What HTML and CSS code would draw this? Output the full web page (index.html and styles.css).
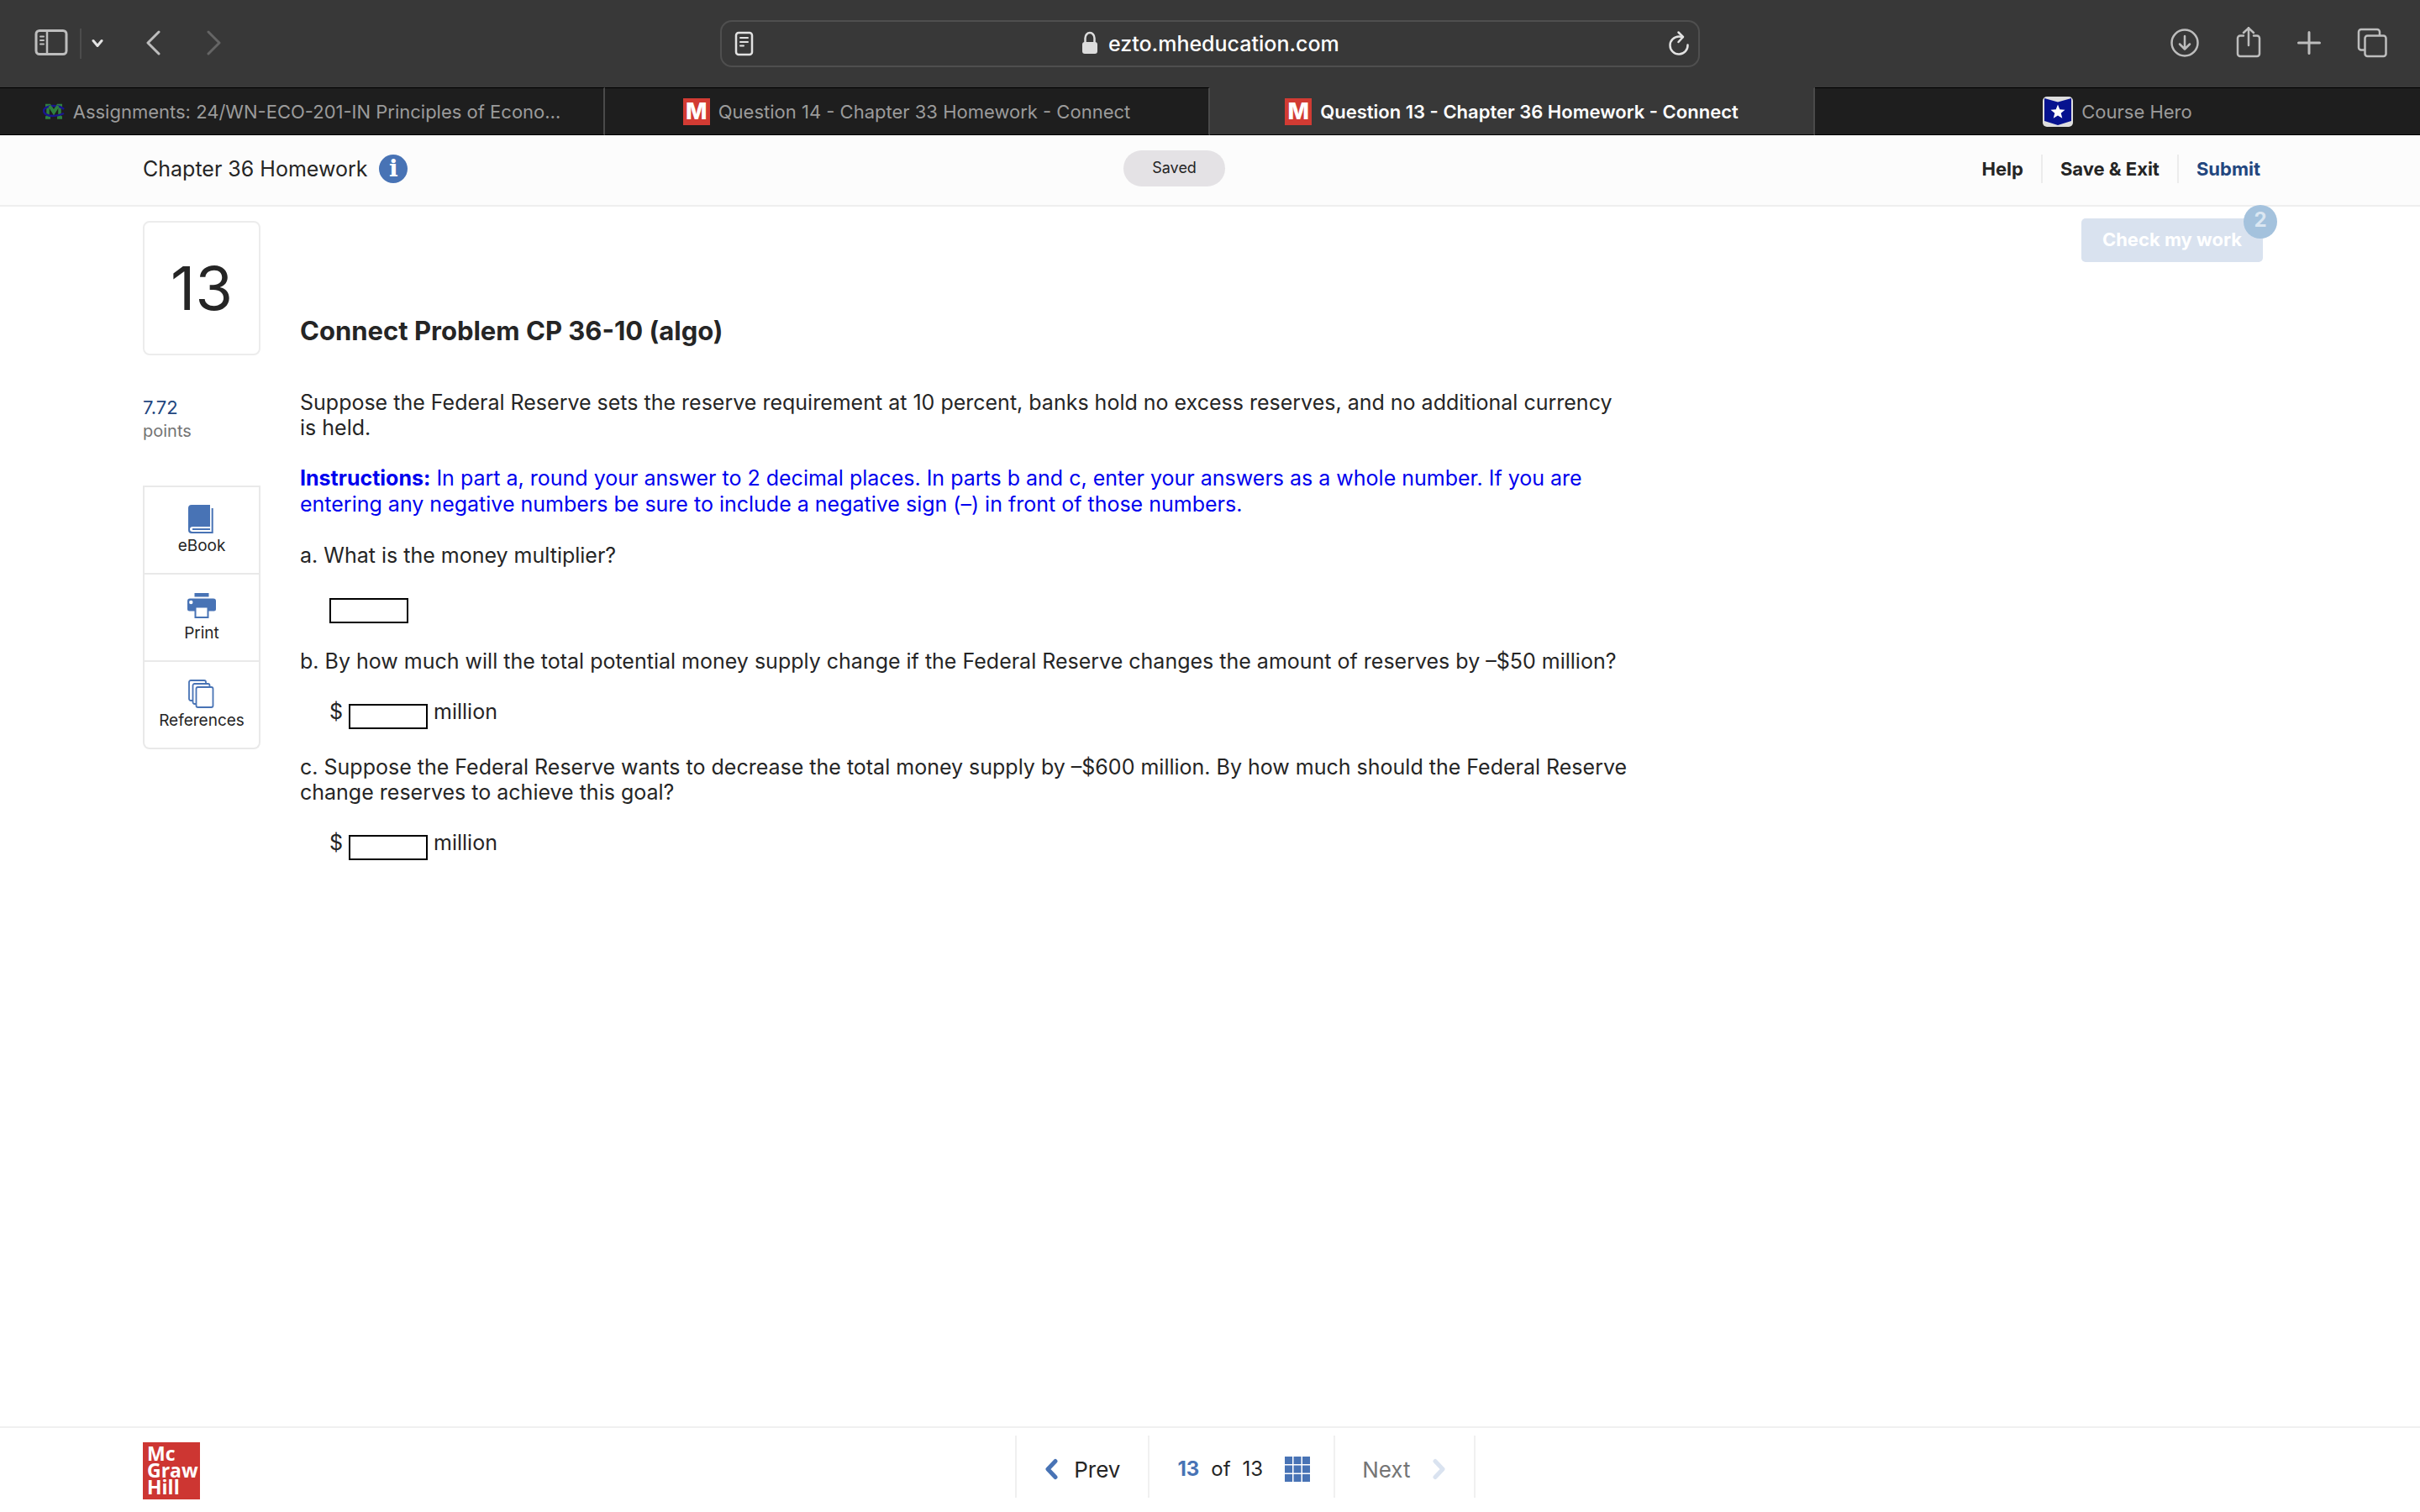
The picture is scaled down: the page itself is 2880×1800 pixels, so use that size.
FILE: index.html
```html
<!DOCTYPE html>
<html lang="en">
<head>
  <meta charset="UTF-8" />
  <meta name="viewport" content="width=device-width, initial-scale=1.0" />
  <title>Question 13 - Chapter 36 Homework - Connect</title>
  <link rel="stylesheet" href="styles.css">
</head>
<body>
  <!-- Browser toolbar -->
  <div class="toolbar">
    <div class="tools-left">
      <button class="icon-btn" aria-label="Sidebar">
        <svg width="44" height="40" viewBox="0 0 44 40" fill="none" stroke="#bdbdbd" stroke-width="3" stroke-linecap="round">
          <rect x="4" y="4.5" width="36" height="28" rx="4"/>
          <path d="M17 5v27" stroke-width="2.5"/>
          <path d="M9 11.500h4M9 16h4M9 20.500h4" stroke-width="2"/>
        </svg>
      </button>
      <span class="tool-divider"></span>
      <button class="icon-btn menu-btn" aria-label="Tab groups">
        <svg width="14" height="40" viewBox="0 0 14 40" fill="none" stroke="#e4e4e4" stroke-width="3" stroke-linecap="round" stroke-linejoin="round"><path d="M2 16.500l5 6 5-6"/></svg>
      </button>
      <button class="icon-btn back-btn" aria-label="Back">
        <svg width="18" height="40" viewBox="0 0 18 40" fill="none" stroke="#bdbdbd" stroke-width="3" stroke-linecap="round" stroke-linejoin="round"><path d="M15 6L2 19l13 13"/></svg>
      </button>
      <button class="icon-btn" aria-label="Forward" disabled>
        <svg width="18" height="40" viewBox="0 0 18 40" fill="none" stroke="#656565" stroke-width="3" stroke-linecap="round" stroke-linejoin="round"><path d="M2 6l13 13L2 32"/></svg>
      </button>
    </div>

    <div class="address">
      <button class="icon-btn" aria-label="Reader">
        <svg width="24" height="32" viewBox="0 0 24 32" fill="none" stroke="#e2e2e2" stroke-width="2.5" stroke-linecap="round">
          <rect x="3" y="3" width="19" height="26" rx="3"/>
          <path d="M8 9h9M8 14h9M8 18.500h4" stroke-width="2"/>
        </svg>
      </button>
      <div class="address-url">
        <svg width="20" height="32" viewBox="0 0 20 32">
          <path d="M4.500 15V9.500a5.500 6.500 0 0 1 11 0V15" fill="none" stroke="#dcdcdc" stroke-width="2.500"/>
          <rect x="1" y="14" width="18" height="14" rx="3" fill="#dcdcdc"/>
        </svg>
        <input class="url-input" type="text" aria-label="Address" value="ezto.mheducation.com">
      </div>
      <button class="icon-btn" aria-label="Reload">
        <svg width="26" height="32" viewBox="0 0 26 32" fill="none" stroke="#e2e2e2" stroke-width="2.500" stroke-linecap="round" stroke-linejoin="round">
          <path d="M23.500 17.500A10.500 10.500 0 1 1 13 7.500c1.500 0 3 .2 4.500.8"/>
          <path d="M12.500 2.500l5.500 5.500-5.500 6"/>
        </svg>
      </button>
    </div>

    <div class="tools-right">
      <button class="icon-btn" aria-label="Downloads">
        <svg width="36" height="40" viewBox="0 0 36 40" fill="none" stroke="#bdbdbd" stroke-width="2.500" stroke-linecap="round" stroke-linejoin="round">
          <circle cx="18" cy="19" r="15.500"/>
          <path d="M18 11v15M12 20.500l6 6 6-6"/>
        </svg>
      </button>
      <button class="icon-btn" aria-label="Share">
        <svg width="30" height="40" viewBox="0 0 30 40" fill="none" stroke="#bdbdbd" stroke-width="2.500" stroke-linecap="round" stroke-linejoin="round">
          <path d="M9 10.500H5a3 3 0 0 0-3 3V32a3 3 0 0 0 3 3h20a3 3 0 0 0 3-3V13.500a3 3 0 0 0-3-3h-4"/>
          <path d="M15 22V1M9 7l6-5.700L21 7"/>
        </svg>
      </button>
      <button class="icon-btn" aria-label="New tab">
        <svg width="28" height="40" viewBox="0 0 28 40" fill="none" stroke="#bdbdbd" stroke-width="3" stroke-linecap="round"><path d="M14 6.500v25M1.500 19h25"/></svg>
      </button>
      <button class="icon-btn" aria-label="Tab overview">
        <svg width="36" height="40" viewBox="0 0 36 40" fill="none" stroke="#bdbdbd" stroke-width="2.500" stroke-linejoin="round">
          <path d="M9 27.500H5a3 3 0 0 1-3-3V6a3 3 0 0 1 3-3h19a3 3 0 0 1 3 3v4"/>
          <rect x="9.500" y="10.500" width="25" height="24.500" rx="3"/>
        </svg>
      </button>
    </div>
  </div>

  <nav class="tabs">
    <a class="tab" href="#">
      <svg width="26" height="24" viewBox="0 0 26 24" fill="none">
        <path d="M3 4.500h5l5 8 5-8h5M6 4v14M20 4v15M3 19h6M17 19h6" stroke="#2f8040" stroke-width="3.500"/>
        <path d="M25 9c-3-3-8-4-13-4S1 7.500 1 11s5 6 11 6 9-1 13-3" stroke="#1a1590" stroke-width="2.500"/>
        <path d="M8 5l5 8 5-8" stroke="#2f8040" stroke-width="3.500"/>
      </svg>
      Assignments: 24/WN-ECO-201-IN Principles of Econo…
    </a>
    <a class="tab" href="#"><span class="favicon">M</span>Question 14 - Chapter 33 Homework - Connect</a>
    <a class="tab active" href="#"><span class="favicon">M</span>Question 13 - Chapter 36 Homework - Connect</a>
    <a class="tab" href="#">
      <svg width="36" height="36" viewBox="0 0 36 36">
        <rect width="36" height="36" rx="5" fill="#dedede"/>
        <path d="M2 2l16 4.500L34 2v27l-16 5-16-5z" fill="#06128f"/>
        <path d="M18 9.500l2.300 5.800 6.200.4-4.800 4 1.600 6.100-5.300-3.400-5.300 3.400 1.600-6.100-4.800-4 6.200-.4z" fill="#fff"/>
      </svg>
      Course Hero
    </a>
  </nav>

  <header class="header">
    <div class="header-title">
      <span>Chapter 36 Homework</span>
      <button class="info-btn" aria-label="Information">i</button>
    </div>
    <span class="saved">Saved</span>
    <nav class="header-nav">
      <a href="#">Help</a>
      <a href="#">Save &amp; Exit</a>
      <a class="submit" href="#">Submit</a>
    </nav>
  </header>

  <main class="main">
    <aside class="sidebar">
      <div class="number">13</div>
      <div class="points-value">7.72</div>
      <div class="points-label">points</div>
      <div class="side-tools">
        <button class="side-btn">
          <svg width="34" height="34" viewBox="0 0 34 34" fill="#4873b5">
            <path d="M5 0H27V26H6.500a3.500 3 0 0 0 0 6H28.700V4h2V34H5a4 4 0 0 1-4-4V4a4 4 0 0 1 4-4z"/>
            <path d="M6 28h21v2H6z"/>
          </svg>
          eBook
        </button>
        <button class="side-btn">
          <svg width="34" height="34" viewBox="0 0 34 34" fill="#4873b5">
            <path d="M8.500 1h17v4.500h-17zM3 7.500h28a3 3 0 0 1 3 3V20a2.500 2.500 0 0 1-2.500 2.500H25.500V31h-17v-8.500H2.500A2.500 2.500 0 0 1 0 20v-9.500a3 3 0 0 1 3-3z"/>
            <path d="M10.500 18.500h13v10.500h-13z" fill="#fff"/>
            <circle cx="4.300" cy="12" r="2.200" fill="#fff"/>
          </svg>
          Print
        </button>
        <button class="side-btn">
          <svg width="34" height="34" viewBox="0 0 34 34" fill="#fff" stroke="#4873b5" stroke-width="1.800">
            <rect x="2" y="1" width="20" height="24" rx="2"/>
            <rect x="6.500" y="5" width="20" height="24" rx="2"/>
            <rect x="10.500" y="9" width="20" height="24" rx="2"/>
          </svg>
          References
        </button>
      </div>
    </aside>

    <section class="question">
      <h1>Connect Problem CP 36-10 (algo)</h1>
      <p>Suppose the Federal Reserve sets the reserve requirement at 10 percent, banks hold no excess reserves, and no additional currency is held.</p>
      <p class="instructions"><b>Instructions:</b> In part a, round your answer to 2 decimal places. In parts b and c, enter your answers as a whole number. If you are entering any negative numbers be sure to include a negative sign (–) in front of those numbers.</p>
      <p><label for="answer-a">a. What is the money multiplier?</label></p>
      <div class="answer"><input id="answer-a" type="text"></div>
      <p><label for="answer-b">b. By how much will the total potential money supply change if the Federal Reserve changes the amount of reserves by –$50 million?</label></p>
      <div class="answer"><span>$</span><input id="answer-b" type="text"><span>million</span></div>
      <p><label for="answer-c">c. Suppose the Federal Reserve wants to decrease the total money supply by –$600 million. By how much should the Federal Reserve change reserves to achieve this goal?</label></p>
      <div class="answer"><span>$</span><input id="answer-c" type="text"><span>million</span></div>
    </section>

    <div class="check">
      <button class="check-btn" disabled>Check my work</button>
      <span class="check-count">2</span>
    </div>
  </main>

  <footer class="footer">
    <a class="logo" href="#">Mc<br>Graw<br>Hill</a>
    <nav class="pager">
      <button class="pager-cell prev">
        <svg width="16" height="26" viewBox="0 0 16 26" fill="none" stroke="#4873b5" stroke-width="5" stroke-linecap="round" stroke-linejoin="round"><path d="M13 3.500L4 13l9 9.500"/></svg>
        Prev
      </button>
      <div class="pager-cell count">
        <b>13</b><span>of</span><span>13</span>
        <button class="icon-btn grid-btn" aria-label="Question list">
          <svg width="30" height="30" viewBox="0 0 30 30" fill="#4873b5"><path d="M0 0h9v9H0zM10.500 0h9v9h-9zM21 0h9v9h-9zM0 10.500h9v9H0zM10.500 10.500h9v9h-9zM21 10.500h9v9h-9zM0 21h9v9H0zM10.500 21h9v9h-9zM21 21h9v9h-9z"/></svg>
        </button>
      </div>
      <button class="pager-cell next" disabled>
        Next
        <svg width="16" height="26" viewBox="0 0 16 26" fill="none" stroke="#dae3f0" stroke-width="5" stroke-linecap="round" stroke-linejoin="round"><path d="M3 3.500l9 9.500-9 9.500"/></svg>
      </button>
    </nav>
  </footer>
</body>
</html>
```
FILE: styles.css
```css
* {
  box-sizing: border-box;
}
body {
  margin: 0;
  min-height: 100vh;
  display: flex;
  flex-direction: column;
  font-family: Inter, "Open Sans", sans-serif;
  font-size: 25px;
  line-height: 30px;
  color: #252525;
  background: #fff;
}
button,
input {
  font-family: inherit;
  color: inherit;
}
a {
  color: inherit;
  text-decoration: none;
}
svg {
  display: block;
  flex: none;
}
.icon-btn {
  padding: 0;
  border: none;
  background: none;
}

/* browser toolbar */
.toolbar {
  display: grid;
  grid-template-columns: 1fr minmax(0, 1166px) 1fr;
  align-items: center;
  height: 104px;
  padding: 0 39px;
  background: #383838;
}
.tools-left,
.tools-right {
  display: flex;
  align-items: center;
}
.tool-divider {
  width: 2px;
  height: 36px;
  margin: 0 12px;
  background: #4c4c4c;
}
.menu-btn {
  margin-right: 51px;
}
.back-btn {
  margin-right: 54px;
}
.tools-right {
  justify-content: flex-end;
  gap: 43px;
}
.address {
  display: flex;
  align-items: center;
  height: 56px;
  padding: 0 10px 0 14px;
  border: 2px solid #4f4f4f;
  border-radius: 14px;
}
.address-url {
  flex: 1;
  display: flex;
  align-items: center;
  justify-content: center;
  gap: 12px;
}
.url-input {
  width: 276px;
  padding: 0;
  border: none;
  background: none;
  font-size: 25px;
  font-weight: 500;
  color: #fff;
}

/* tabs */
.tabs {
  display: grid;
  grid-template-columns: repeat(4, 1fr);
}
.tab {
  display: flex;
  align-items: center;
  justify-content: center;
  gap: 10px;
  height: 57px;
  border-top: 1px solid #000;
  border-bottom: 1px solid #000;
  border-right: 2px solid #4a4a4a;
  background: #1e1e1e;
  font-size: 22px;
  color: #9b9b9b;
  white-space: nowrap;
}
.tab:last-child {
  border-right: none;
}
.tab.active {
  border-top-color: #383838;
  background: #383838;
  font-weight: 600;
  color: #fff;
}
.favicon {
  width: 32px;
  height: 32px;
  background: #d23b33;
  font-size: 27px;
  font-weight: 800;
  line-height: 32px;
  text-align: center;
  color: #fff;
}

/* page header */
.header {
  display: grid;
  grid-template-columns: 18fr auto 19fr;
  align-items: center;
  height: 85px;
  padding: 0 190px 4px 170px;
  border-bottom: 2px solid #efefef;
  background: #fcfcfc;
}
.header-title {
  display: flex;
  align-items: center;
  gap: 14px;
}
.info-btn {
  width: 34px;
  height: 34px;
  padding: 0;
  border: none;
  border-radius: 50%;
  background: #4873b5;
  font-family: "DejaVu Serif", serif;
  font-size: 28px;
  font-weight: bold;
  line-height: 34px;
  color: #fff;
}
.saved {
  padding: 6px 34px 7px;
  border-radius: 22px;
  background: #e4e2e5;
  font-size: 18px;
}
.header-nav {
  display: flex;
  justify-content: flex-end;
  font-size: 22px;
  font-weight: 700;
  line-height: 34px;
}
.header-nav a {
  padding: 0 21px;
  border-left: 2px solid #ececec;
}
.header-nav a:first-child {
  border-left: none;
}
.header-nav a:last-child {
  padding-right: 0;
}
.submit {
  color: #23477f;
}

/* question */
.main {
  flex: 1;
  display: flex;
  align-items: flex-start;
  padding: 0 187px 0 170px;
}
.sidebar {
  flex: none;
  width: 140px;
  padding-top: 17px;
}
.number {
  height: 160px;
  margin-bottom: 48px;
  border: 2px solid #ececec;
  border-radius: 8px;
  font-size: 72px;
  line-height: 156px;
  text-align: center;
}
.points-value {
  font-size: 22px;
  line-height: 28px;
  color: #23477f;
}
.points-label {
  font-size: 20px;
  line-height: 28px;
  color: #747474;
}
.side-tools {
  margin-top: 51px;
  border: 2px solid #e9e9e9;
  border-top: none;
  border-radius: 0 0 8px 8px;
}
.side-btn {
  display: flex;
  flex-direction: column;
  align-items: center;
  gap: 2px;
  width: 100%;
  height: 104px;
  padding: 21px 0 0;
  border: none;
  border-top: 2px solid #e9e9e9;
  background: none;
  font-size: 19px;
  line-height: 26px;
}
.question {
  max-width: 1629px;
  margin-right: auto;
  padding: 128px 0 0 47px;
}
.question h1 {
  margin: 0 0 50px;
  font-size: 31px;
  line-height: 40px;
}
.question p {
  margin: 0 0 30px;
}
.question .instructions {
  line-height: 31px;
  color: #0000ee;
}
.answer {
  display: flex;
  gap: 7px;
  height: 36px;
  margin-bottom: 30px;
  padding-left: 35px;
}
.answer input {
  align-self: flex-end;
  width: 94px;
  height: 30px;
  padding: 0 4px;
  border: 2px solid #000;
  background: #fff;
  font-size: 22px;
}
.check {
  position: relative;
  flex: none;
  margin-top: 14px;
}
.check-btn {
  height: 52px;
  padding: 0 25px 3px;
  border: none;
  border-radius: 5px;
  background: #d9e2ef;
  font-size: 22px;
  font-weight: 700;
  color: #fff;
}
.check-count {
  position: absolute;
  top: -16px;
  right: -17px;
  width: 40px;
  height: 40px;
  border-radius: 50%;
  background: #a4c2dd;
  font-size: 24px;
  font-weight: 700;
  line-height: 36px;
  text-align: center;
  color: #dbe7f2;
}

/* footer */
.footer {
  display: grid;
  grid-template-columns: 10fr auto 9fr;
  padding: 9px 190px 15px 170px;
  border-top: 2px solid #f0f0f0;
}
.logo {
  align-self: end;
  width: 68px;
  height: 68px;
  padding: 3px 0 0 5px;
  background: #cd3632;
  font-family: "Open Sans", sans-serif;
  font-size: 23px;
  font-weight: 700;
  line-height: 20px;
  color: #fff;
}
.pager {
  display: flex;
  height: 74px;
  margin-bottom: 2px;
}
.pager-cell {
  display: flex;
  align-items: center;
  padding: 6px 33px 0;
  border: none;
  border-left: 2px solid #f0f0f0;
  background: none;
  font-size: 26px;
}
.prev,
.next {
  gap: 19px;
}
.count {
  gap: 14px;
  padding-right: 28px;
  font-size: 24px;
}
.count b {
  color: #4873b5;
}
.grid-btn {
  margin-left: 12px;
}
.next {
  gap: 26px;
  padding-left: 32px;
  border-right: 2px solid #f0f0f0;
  color: #757575;
}
```
